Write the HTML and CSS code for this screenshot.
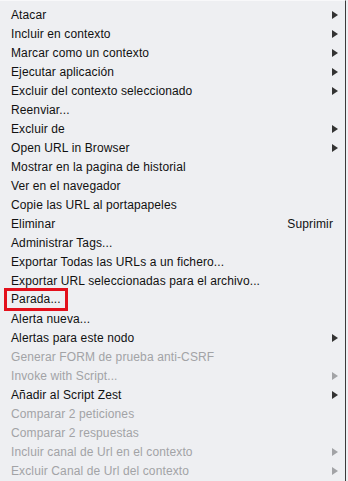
FILE: index.html
```html
<!DOCTYPE html>
<html>
    <head>
        <title>Menu contextual</title>
        <link rel="stylesheet" href="styles.css">
    </head>
    <body>
        <div class="menu">
            <div class="item sub">Atacar</div>
            <div class="item sub">Incluir en contexto</div>
            <div class="item sub">Marcar como un contexto</div>
            <div class="item sub">Ejecutar aplicación</div>
            <div class="item sub">Excluir del contexto seleccionado</div>
            <div class="item">Reenviar...</div>
            <div class="item sub">Excluir de</div>
            <div class="item sub">Open URL in Browser</div>
            <div class="item">Mostrar en la pagina de historial</div>
            <div class="item">Ver en el navegador</div>
            <div class="item">Copie las URL al portapapeles</div>
            <div class="item">Eliminar<span class="shortcut">Suprimir</span></div>
            <div class="item">Administrar Tags...</div>
            <div class="item">Exportar Todas las URLs a un fichero...</div>
            <div class="item">Exportar URL seleccionadas para el archivo...</div>
            <div class="item"><span class="marked">Parada...</span></div>
            <div class="item">Alerta nueva...</div>
            <div class="item sub">Alertas para este nodo</div>
            <div class="item disabled">Generar FORM de prueba anti-CSRF</div>
            <div class="item sub disabled">Invoke with Script...</div>
            <div class="item sub">Añadir al Script Zest</div>
            <div class="item disabled">Comparar 2 peticiones</div>
            <div class="item disabled">Comparar 2 respuestas</div>
            <div class="item sub disabled">Incluir canal de Url en el contexto</div>
            <div class="item sub disabled">Excluir Canal de Url del contexto</div>
        </div>
    </body>
</html>
```

FILE: styles.css
```css
body {
    margin: 0;
    padding: 0;
    background-color: #eeeff2;
    font-family: "Liberation Sans", Arial, sans-serif;
    font-size: 12px;
    letter-spacing: 0.12px;
    color: #111;
}

.menu {
    width: 346px;
    height: 481px;
    box-sizing: border-box;
    padding-top: 4px;
    border-right: 1px solid #3a3a3a;
    border-top: 1px solid #f8f8fa;
    background-color: #eeeff2;
}

.item {
    display: flex;
    align-items: center;
    height: 19px;
    padding-left: 11px;
    padding-right: 7px;
    position: relative;
}

.shortcut {
    margin-left: auto;
    margin-right: 5px;
}

/* arrow for items with a submenu */
.sub::after {
    content: "";
    margin-left: auto;
    border-left: 6px solid #333;
    border-top: 4px solid transparent;
    border-bottom: 4px solid transparent;
}

.disabled {
    color: #a2a3a6;
}

.sub.disabled::after {
    border-left-color: #a2a3a6;
}

.marked {
    outline: 3px solid #e3101c;
    outline-offset: 2px;
    margin-left: -2px;
    padding-left: 2px;
    padding-right: 2px;
    line-height: 13px;
}
```
